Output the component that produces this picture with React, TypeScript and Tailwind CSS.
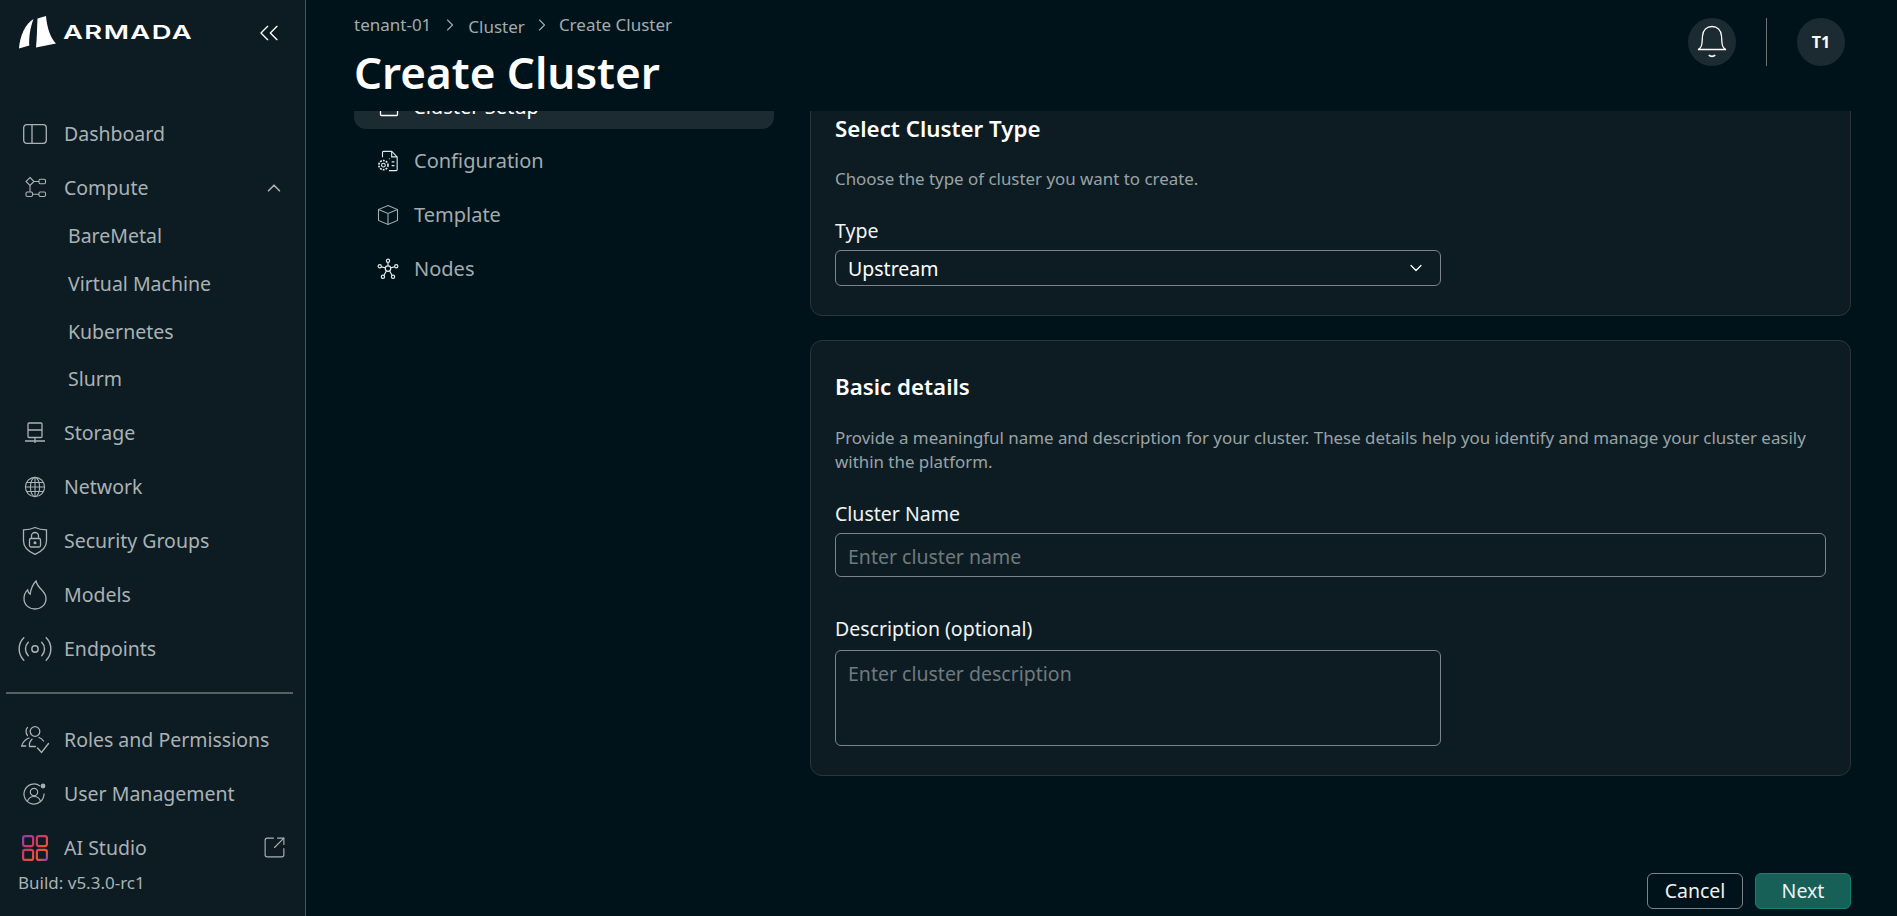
import React from 'react';
import { ChevronDown, ChevronRight, ChevronUp, ChevronsLeft, Radio, SquareArrowOutUpRight } from 'lucide-react';

const DashboardIcon = () => (
  <svg width="24" height="20" viewBox="0 0 24 20" fill="none" stroke="currentColor" strokeWidth="1.300">
    <rect x="0.700" y="0.700" width="22.600" height="18.600" rx="3" />
    <path d="M9 0.700v18.600" />
  </svg>
);

const ComputeIcon = () => (
  <svg width="24" height="24" viewBox="0 0 24 24" fill="none" stroke="currentColor" strokeWidth="1.100">
    <path d="M7 1.500 11 5.500l-4 4-4-4z" />
    <rect x="16" y="3.200" width="6.500" height="4.500" rx="1.200" />
    <rect x="3" y="16" width="6.500" height="4.500" rx="1.200" />
    <rect x="16" y="16" width="6.500" height="4.500" rx="1.200" />
    <path d="M11 5.500h5M7 9.500V16M9.500 18.200H16" />
  </svg>
);

const StorageIcon = () => (
  <svg width="22" height="24" viewBox="0 0 22 24" fill="none" stroke="currentColor" strokeWidth="1.300">
    <rect x="4" y="2" width="14" height="14.500" rx="1" />
    <path d="M4 9h14M11 16.500V22M1 20h20" />
  </svg>
);

const GlobeIcon = () => (
  <svg width="22" height="22" viewBox="0 0 22 22" fill="none" stroke="currentColor" strokeWidth="1.100">
    <circle cx="11" cy="11" r="9.600" />
    <ellipse cx="11" cy="11" rx="4.600" ry="9.600" />
    <path d="M11 1.400v19.200M1.400 11h19.200M2.800 6.500h16.400M2.800 15.500h16.400" />
  </svg>
);

const ShieldLockIcon = () => (
  <svg width="26" height="30" viewBox="0 0 26 30" fill="none" stroke="currentColor" strokeWidth="1.300">
    <path d="M13 1.500c3.500 1.600 7.400 2.300 11.500 2.400v11c0 6.300-4.800 10.500-11.500 13.500C6.300 25.400 1.500 21.200 1.500 14.900v-11C5.600 3.800 9.500 3.100 13 1.500z" />
    <rect x="7.500" y="12.500" width="11" height="8.500" rx="1.500" />
    <path d="M9.500 12.500V10a3.500 3.500 0 0 1 7 0v2.500" />
    <circle cx="13" cy="16.700" r="0.900" fill="currentColor" />
  </svg>
);

const FlameIcon = () => (
  <svg width="24" height="30" viewBox="0 0 24 30" fill="none" stroke="currentColor" strokeWidth="1.300">
    <path d="M13 1c.8 3.800 2.800 6 5.600 8.800 2.400 2.500 4.400 5.300 4.400 8.700C23 24.800 18 29 12 29S1 24.800 1 18.500c0-3.400 1.300-6.300 3.600-8.600.3 2 1.200 3.400 2.600 4.300C7.800 9 9.600 4.500 13 1z" />
  </svg>
);

const RolesIcon = () => (
  <svg width="30" height="30" viewBox="0 0 30 30" fill="none" stroke="currentColor" strokeWidth="1.300" strokeLinecap="round">
    <circle cx="15" cy="6.500" r="4.800" />
    <path d="M7.500 2.500C5.700 4 5.500 8 7.500 10.500" />
    <path d="M9 13C5 14.500 2.800 17 1.700 21h4" />
    <path d="M19 12.500c2 .8 3.500 2 4.500 3.500" />
    <path d="M9.500 21c-.5-2.500.5-5 2.500-6.800" />
    <path d="M9.500 21.500h6" />
    <path d="m17.500 23 4 4.500 7-9" />
  </svg>
);

const UserGearIcon = () => (
  <svg width="24" height="24" viewBox="0 0 24 24" fill="none" stroke="currentColor" strokeWidth="1.200">
    <path d="M17 4A10 10 0 1 0 21 11.500" />
    <circle cx="11" cy="10" r="3.700" />
    <path d="M4.600 19c1-3 3.400-4.500 6.400-4.500s5.400 1.500 6.400 4.500" />
    <circle cx="20" cy="4" r="1.800" fill="currentColor" />
  </svg>
);

const StudioIcon = () => (
  <svg width="26" height="26" viewBox="0 0 26 26" fill="none" strokeWidth="2.200">
    <defs>
      <linearGradient id="studio" gradientUnits="userSpaceOnUse" x1="0" y1="0" x2="26" y2="26">
        <stop offset="0" stopColor="#8a3fb8" />
        <stop offset="0.400" stopColor="#d33860" />
        <stop offset="0.750" stopColor="#f2562c" />
        <stop offset="1" stopColor="#7b3fc4" />
      </linearGradient>
    </defs>
    <g stroke="url(#studio)">
      <rect x="1.100" y="1.100" width="10" height="10" rx="2" />
      <rect x="14.900" y="1.100" width="10" height="10" rx="2" />
      <rect x="1.100" y="14.900" width="10" height="10" rx="2" />
      <rect x="14.900" y="14.900" width="10" height="10" rx="2" />
    </g>
  </svg>
);

const ArmadaMark = () => (
  <svg width="37" height="33" viewBox="0 0 37 33" fill="white">
    <path d="M0 32.500C1 20 6 8 14.500 3 11 12 9.800 22 10.300 29.500z" />
    <path d="M17 31.500c1-9 1-20 1.500-29L27 0c1 12 4.500 22 10 27.500z" />
  </svg>
);

const BellIcon = () => (
  <svg width="30" height="34" viewBox="0 0 30 34" fill="none" stroke="white" strokeWidth="1.300">
    <path d="M1 24.500c2.800-1 3.800-3 4.100-7.500l.4-6C6 5 9.800 1.500 15 1.500S24 5 24.500 11l.4 6c.3 4.500 1.300 6.500 4.100 7.500z" />
    <path d="M11.800 30c1.600 1.800 4.800 1.800 6.400 0" strokeWidth="1.600" />
  </svg>
);

const ConfigIcon = () => (
  <svg width="24" height="24" viewBox="0 0 24 24" fill="none" stroke="#e4e8ea" strokeWidth="1.200">
    <path d="M6 8V2.500a1 1 0 0 1 1-1h9l6 6v14a1 1 0 0 1-1 1h-8" />
    <path d="M16 1.500v6h6M13 9.500h1M16 13h3M16 17h3" />
    <circle cx="7" cy="16.500" r="2" />
    <circle cx="7" cy="16.500" r="5" strokeDasharray="2 1.200" strokeWidth="1.800" />
  </svg>
);

const CubeIcon = () => (
  <svg width="22" height="22" viewBox="0 0 22 22" fill="none" stroke="currentColor" strokeWidth="1.100">
    <path d="M11 1.500 20.500 5.500v11L11 20.500 1.500 16.500v-11z" />
    <path d="M1.500 5.500 11 9.500l9.500-4M11 9.500v11" />
  </svg>
);

const NodesIcon = () => (
  <svg width="24" height="24" viewBox="0 0 24 24" fill="none" stroke="#e4e8ea" strokeWidth="1.300">
    <circle cx="12" cy="11.500" r="3" />
    <circle cx="12" cy="3" r="1.800" />
    <circle cx="3" cy="9" r="1.800" />
    <circle cx="21" cy="9" r="1.800" />
    <circle cx="6.500" cy="20.500" r="1.800" />
    <circle cx="17.500" cy="20.500" r="1.800" />
    <path d="M12 4.800v3.700M4.700 9.600l4.500 1M19.300 9.600l-4.500 1M7.500 19l2.800-5M16.500 19l-2.800-5" />
  </svg>
);

const SelectedStepIcon = () => (
  <svg width="20" height="20" viewBox="0 0 20 20" fill="none" stroke="white" strokeWidth="1.300">
    <rect x="1.500" y="1.500" width="17" height="17" rx="1" />
  </svg>
);

const NavRow = ({ icon, label, right }: { icon: React.ReactNode; label: string; right?: React.ReactNode }) => (
  <div className="flex h-[46px] items-center pr-[20px]">
    <div className="flex w-[64px] shrink-0 justify-center pl-[5px]">{icon}</div>
    <span className="flex-1">{label}</span>
    {right}
  </div>
);

const Card = ({ children }: { children: React.ReactNode }) => (
  <section className="rounded-[12px] border border-[#2a353a] bg-[#0d1c23] px-[24px] pt-[31px] pb-[29px]">{children}</section>
);

const App = () => {
  const subItems = ['BareMetal', 'Virtual Machine', 'Kubernetes', 'Slurm'];
  const steps = [
    { label: 'Configuration', icon: <ConfigIcon /> },
    { label: 'Template', icon: <CubeIcon /> },
    { label: 'Nodes', icon: <NodesIcon /> },
  ];

  return (
    <div className="flex h-[916px] w-full overflow-hidden bg-[#01131a] font-['Noto_Sans',sans-serif] text-white">
      <aside className="flex w-[306px] shrink-0 flex-col border-r border-[#4a5459] bg-[#0d1c23] text-[19.500px] text-[#aab2b5]">
        <div className="flex h-[111px] shrink-0 items-start justify-between pl-[19px] pr-[20px] pt-[16px]">
          <div className="flex items-center gap-[7px]">
            <ArmadaMark />
            <span className="origin-left scale-x-[1.440] font-['Inter',sans-serif] text-[19px] font-semibold leading-[24px] tracking-[1px] text-white">ARMADA</span>
          </div>
          <ChevronsLeft size={32} strokeWidth={1} className="mt-[1px] text-white" />
        </div>

        <nav className="flex flex-col gap-2">
          <NavRow icon={<DashboardIcon />} label="Dashboard" />
          <div>
            <NavRow icon={<ComputeIcon />} label="Compute" right={<ChevronUp size={22} strokeWidth={1.800} />} />
            {subItems.map((item) => (
              <div key={item} className="flex h-[47.700px] items-center pl-[68px] pt-[2px]">{item}</div>
            ))}
          </div>
          <NavRow icon={<StorageIcon />} label="Storage" />
          <NavRow icon={<GlobeIcon />} label="Network" />
          <NavRow icon={<ShieldLockIcon />} label="Security Groups" />
          <NavRow icon={<FlameIcon />} label="Models" />
          <NavRow icon={<Radio size={38} strokeWidth={0.900} />} label="Endpoints" />
        </nav>

        <div className="ml-[6px] mr-[12px] mt-[20px] h-[2px] bg-[#565f63]" />

        <nav className="mt-[23px] flex flex-col gap-2">
          <NavRow icon={<RolesIcon />} label="Roles and Permissions" />
          <NavRow icon={<UserGearIcon />} label="User Management" />
          <NavRow icon={<StudioIcon />} label="AI Studio" right={<SquareArrowOutUpRight size={25} strokeWidth={1.100} className="mr-[-2px]" />} />
        </nav>
        <div className="mt-[1px] pl-[18px] text-[17px] leading-[22px]">Build: v5.3.0-rc1</div>
      </aside>

      <main className="flex min-w-0 flex-1 flex-col">
        <header className="z-10 flex h-[111px] shrink-0 justify-between bg-[#01131a] pl-[48px] pr-[52px]">
          <div className="pt-[13px]">
            <div className="flex h-[24px] items-center text-[17px] text-[#a3abae]">
              <span>tenant-01</span>
              <ChevronRight size={20} strokeWidth={1.300} className="mx-[8.500px]" />
              <span className="mt-[3px]">Cluster</span>
              <ChevronRight size={20} strokeWidth={1.300} className="mx-[7px]" />
              <span>Create Cluster</span>
            </div>
            <h1 className="mt-[7px] text-[44px] font-semibold leading-[56px]">Create Cluster</h1>
          </div>
          <div className="flex items-start gap-[30px] pt-[18px]">
            <div className="flex h-[48px] w-[48px] items-center justify-center rounded-full bg-[#1c2b32]">
              <BellIcon />
            </div>
            <div className="h-[48px] w-px bg-[#6a7276]" />
            <div className="flex h-[48px] w-[48px] items-center justify-center rounded-full bg-[#1c2b32] text-[16px] font-bold">T1</div>
          </div>
        </header>

        <div className="min-h-0 flex-1 overflow-hidden pl-[48px] pr-[46px]">
          <div className="-mt-[29px] flex gap-[36px]">
            <div className="mt-[3px] w-[420px] shrink-0 text-[20px] text-[#a3abae]">
              <div className="flex h-[44px] items-center rounded-[12px] bg-[#1c2b32] pl-[25px] text-white">
                <span className="mr-[14px]"><SelectedStepIcon /></span>
                <span>Cluster Setup</span>
              </div>
              {steps.map((step) => (
                <div key={step.label} className="mt-[10px] flex h-[44px] items-center pl-[23px]">
                  <span className="mr-[15px] flex w-[22px] justify-center">{step.icon}</span>
                  <span>{step.label}</span>
                </div>
              ))}
            </div>

            <div className="flex min-w-0 flex-1 flex-col gap-[24px]">
              <Card>
                <h2 className="text-[22.300px] font-semibold leading-[30px]">Select Cluster Type</h2>
                <p className="mt-[23px] text-[16.900px] leading-[24px] text-[#9aa3a6]">Choose the type of cluster you want to create.</p>
                <label className="mt-[27px] block text-[19.500px] leading-[26px] text-[#f0f3f4]">Type</label>
                <div className="mt-[6px] flex h-[36px] w-[606px] items-center justify-between rounded-[6px] border border-[#7b8488] pl-[12px] pr-[14px] text-[19.500px]">
                  <span className="pt-[1px]">Upstream</span>
                  <ChevronDown size={20} strokeWidth={1.500} />
                </div>
              </Card>

              <Card>
                <h2 className="text-[22.300px] font-semibold leading-[30px]">Basic details</h2>
                <p className="mt-[24px] text-[16.900px] leading-[24px] text-[#9aa3a6]">
                  Provide a meaningful name and description for your cluster. These details help you identify and manage your cluster easily within the platform.
                </p>
                <label className="mt-[27px] block text-[19.500px] leading-[26px] text-[#f0f3f4]">Cluster Name</label>
                <input
                  placeholder="Enter cluster name"
                  className="mt-[6px] block h-[44px] w-full rounded-[6px] border border-[#7b8488] bg-transparent px-[12px] pt-[2px] text-[19.500px] outline-none placeholder:text-[#6f7a7e]"
                />
                <label className="mt-[39px] block text-[19.500px] leading-[26px] text-[#f0f3f4]">Description (optional)</label>
                <textarea
                  placeholder="Enter cluster description"
                  className="mt-[8px] block h-[96px] w-[606px] resize-none rounded-[6px] border border-[#7b8488] bg-transparent px-[12px] py-[11px] text-[19.500px] leading-[24px] outline-none placeholder:text-[#6f7a7e]"
                />
              </Card>
            </div>
          </div>
        </div>

        <footer className="flex justify-end gap-[12px] pb-[7px] pr-[46px] text-[19.500px]">
          <button className="h-[36px] w-[96px] rounded-[6px] border border-[#7b8488] text-[#eef1f2]">Cancel</button>
          <button className="h-[36px] w-[96px] rounded-[6px] border border-[#0f8376] bg-[#166058] text-[#eef1f2]">Next</button>
        </footer>
      </main>
    </div>
  );
};

export default App;
